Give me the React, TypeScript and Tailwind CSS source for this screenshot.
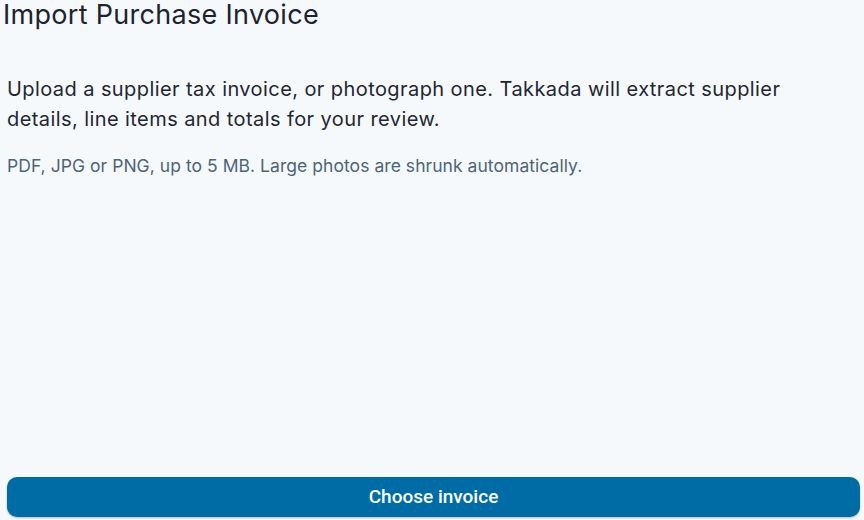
export default function App() {
  return (
    <div className="flex h-[520px] w-[864px] flex-col overflow-hidden bg-[#f5f9fc] font-['Inter',sans-serif]">
      {/* Header */}
      <h1 className="pl-[3px] text-[27px] leading-[30px] font-normal tracking-[0.3px] text-[#1b2430]">
        Import Purchase Invoice
      </h1>

      {/* Body */}
      <div className="flex flex-col gap-[19px] px-[7px] pt-[44px]">
        <p className="text-[20px] leading-[30px] tracking-[0.42px] text-[#1f2733]">
          Upload a supplier tax invoice, or photograph one. Takkada will extract supplier details, line items and totals for your review.
        </p>
        <p className="text-[17.5px] leading-[26px] tracking-[0.05px] text-[#4d6578]">
          PDF, JPG or PNG, up to 5 MB. Large photos are shrunk automatically.
        </p>
      </div>

      {/* Action */}
      <div className="mt-auto pl-[7px] pr-[4px] pb-[3px]">
        <button className="h-[40px] w-full rounded-[10px] bg-[#006ca5] font-['Roboto',sans-serif] text-[19px] font-medium text-white shadow-[0_1px_2px_rgba(0,0,0,0.25)]">
          Choose invoice
        </button>
      </div>
    </div>
  );
}
